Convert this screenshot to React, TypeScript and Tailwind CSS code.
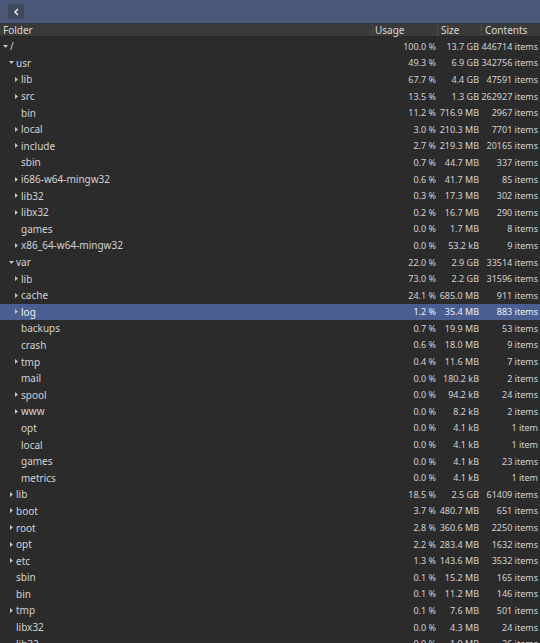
import React from "react";

type Row = {
  name: string;
  level: number;
  arrow?: "open" | "closed";
  usage: string;
  size: string;
  items: string;
  selected?: boolean;
};

const rows: Row[] = [
  { name: "/", level: 0, arrow: "open", usage: "100.0 %", size: "13.7 GB", items: "446714 items" },
  { name: "usr", level: 1, arrow: "open", usage: "49.3 %", size: "6.9 GB", items: "342756 items" },
  { name: "lib", level: 2, arrow: "closed", usage: "67.7 %", size: "4.4 GB", items: "47591 items" },
  { name: "src", level: 2, arrow: "closed", usage: "13.5 %", size: "1.3 GB", items: "262927 items" },
  { name: "bin", level: 2, usage: "11.2 %", size: "716.9 MB", items: "2967 items" },
  { name: "local", level: 2, arrow: "closed", usage: "3.0 %", size: "210.3 MB", items: "7701 items" },
  { name: "include", level: 2, arrow: "closed", usage: "2.7 %", size: "219.3 MB", items: "20165 items" },
  { name: "sbin", level: 2, usage: "0.7 %", size: "44.7 MB", items: "337 items" },
  { name: "i686-w64-mingw32", level: 2, arrow: "closed", usage: "0.6 %", size: "41.7 MB", items: "85 items" },
  { name: "lib32", level: 2, arrow: "closed", usage: "0.3 %", size: "17.3 MB", items: "302 items" },
  { name: "libx32", level: 2, arrow: "closed", usage: "0.2 %", size: "16.7 MB", items: "290 items" },
  { name: "games", level: 2, usage: "0.0 %", size: "1.7 MB", items: "8 items" },
  { name: "x86_64-w64-mingw32", level: 2, arrow: "closed", usage: "0.0 %", size: "53.2 kB", items: "9 items" },
  { name: "var", level: 1, arrow: "open", usage: "22.0 %", size: "2.9 GB", items: "33514 items" },
  { name: "lib", level: 2, arrow: "closed", usage: "73.0 %", size: "2.2 GB", items: "31596 items" },
  { name: "cache", level: 2, arrow: "closed", usage: "24.1 %", size: "685.0 MB", items: "911 items" },
  { name: "log", level: 2, arrow: "closed", usage: "1.2 %", size: "35.4 MB", items: "883 items", selected: true },
  { name: "backups", level: 2, usage: "0.7 %", size: "19.9 MB", items: "53 items" },
  { name: "crash", level: 2, usage: "0.6 %", size: "18.0 MB", items: "9 items" },
  { name: "tmp", level: 2, arrow: "closed", usage: "0.4 %", size: "11.6 MB", items: "7 items" },
  { name: "mail", level: 2, usage: "0.0 %", size: "180.2 kB", items: "2 items" },
  { name: "spool", level: 2, arrow: "closed", usage: "0.0 %", size: "94.2 kB", items: "24 items" },
  { name: "www", level: 2, arrow: "closed", usage: "0.0 %", size: "8.2 kB", items: "2 items" },
  { name: "opt", level: 2, usage: "0.0 %", size: "4.1 kB", items: "1 item" },
  { name: "local", level: 2, usage: "0.0 %", size: "4.1 kB", items: "1 item" },
  { name: "games", level: 2, usage: "0.0 %", size: "4.1 kB", items: "23 items" },
  { name: "metrics", level: 2, usage: "0.0 %", size: "4.1 kB", items: "1 item" },
  { name: "lib", level: 1, arrow: "closed", usage: "18.5 %", size: "2.5 GB", items: "61409 items" },
  { name: "boot", level: 1, arrow: "closed", usage: "3.7 %", size: "480.7 MB", items: "651 items" },
  { name: "root", level: 1, arrow: "closed", usage: "2.8 %", size: "360.6 MB", items: "2250 items" },
  { name: "opt", level: 1, arrow: "closed", usage: "2.2 %", size: "283.4 MB", items: "1632 items" },
  { name: "etc", level: 1, arrow: "closed", usage: "1.3 %", size: "143.6 MB", items: "3532 items" },
  { name: "sbin", level: 1, usage: "0.1 %", size: "15.2 MB", items: "165 items" },
  { name: "bin", level: 1, usage: "0.1 %", size: "11.2 MB", items: "146 items" },
  { name: "tmp", level: 1, arrow: "closed", usage: "0.1 %", size: "7.6 MB", items: "501 items" },
  { name: "libx32", level: 1, usage: "0.0 %", size: "4.3 MB", items: "24 items" },
  { name: "lib32", level: 1, usage: "0.0 %", size: "1.0 MB", items: "36 items" },
];

// indent per tree level, in px
const indent = [3, 9, 14];

const Arrow: React.FC<{ kind: "open" | "closed" }> = ({ kind }) => (
  <svg width="5" height="5" viewBox="0 0 5 5" className="shrink-0">
    {kind === "open" ? (
      <polygon points="0,1 5,1 2.5,4" fill="#c4c4c4" />
    ) : (
      <polygon points="1,0 4,2.5 1,5" fill="#c4c4c4" />
    )}
  </svg>
);

const App: React.FC = () => {
  return (
    <div
      className="w-[540px] h-[643px] overflow-hidden bg-[#2b2b2b] text-[10px] leading-none text-[#d2d2d2] whitespace-nowrap"
      style={{ fontFamily: '"Noto Sans", "Open Sans", sans-serif' }}
    >
      {/* Top bar */}
      <div className="h-[24px] bg-[#4b5877] border-b border-[#2f3644] flex items-center px-[8px]">
        <button className="w-[16px] h-[15px] rounded-[2px] bg-[#3e495e] flex items-center justify-center">
          <svg width="7" height="8" viewBox="0 0 7 8">
            <polyline points="5,1 2,4 5,7" fill="none" stroke="#e6e6e6" strokeWidth="1.6" />
          </svg>
        </button>
      </div>

      {/* Column headers */}
      <div className="h-[13px] flex bg-[#3a3a3a] border-b border-[#262626] text-[#d6d6d6]">
        <div className="w-[372px] pl-[3px] flex items-center">Folder</div>
        <div className="w-[65px] pl-[2px] flex items-center border-l border-[#4a4a4a]">Usage</div>
        <div className="w-[44px] pl-[3px] flex items-center border-l border-[#4a4a4a]">Size</div>
        <div className="flex-1 pl-[3px] flex items-center border-l border-[#4a4a4a]">Contents</div>
      </div>

      {/* Tree rows */}
      <div className="flex flex-col pt-[1px]">
        {rows.map((r, i) => (
          <div
            key={i}
            className={`h-[16.6px] shrink-0 flex items-center ${
              r.selected ? "bg-[#4a5e92] text-[#eef0f5]" : ""
            }`}
          >
            <div
              className="w-[372px] flex items-center gap-[2px]"
              style={{ paddingLeft: indent[r.level] }}
            >
              <div className="w-[5px] flex items-center">{r.arrow && <Arrow kind={r.arrow} />}</div>
              <span>{r.name}</span>
            </div>
            <div className="w-[64px] text-right text-[9px]">{r.usage}</div>
            <div className="w-[43px] text-right text-[9px]">{r.size}</div>
            <div className="flex-1 pr-[2px] text-right text-[9px]">{r.items}</div>
          </div>
        ))}
      </div>
    </div>
  );
};

export default App;
